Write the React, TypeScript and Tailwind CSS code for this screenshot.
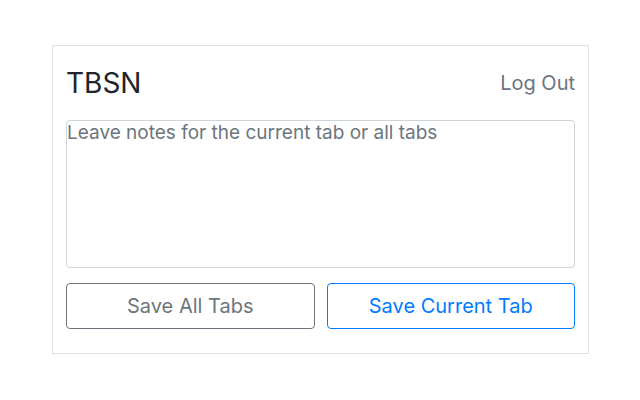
const App = () => {
  return (
    <div
      className="min-h-[400px] w-[640px] bg-white pl-[52px] pt-[45px]"
      style={{ fontFamily: 'Inter, "Liberation Sans", Arial, sans-serif' }}
    >
      <div className="flex w-[537px] flex-col border border-[#dee2e6] px-[13px] pt-[12px] pb-[24px]">
        <div className="mb-[12px] flex h-[50px] items-center justify-between">
          <h1 className="text-[28px] leading-none text-[#212529]">TBSN</h1>
          <button className="text-[20px] leading-none text-[#6c757d]">
            Log Out
          </button>
        </div>
        <textarea
          className="h-[148px] w-full resize-none rounded-[4px] border border-[#ced4da] px-0 py-0 text-[19px] leading-[1.25] text-[#495057] placeholder:text-[#6c757d] focus:outline-none"
          placeholder="Leave notes for the current tab or all tabs"
        />
        <div className="mt-[15px] grid grid-cols-2 gap-[12px]">
          <button className="h-[46px] rounded-[4px] border border-[#6c757d] text-[20px] text-[#6c757d]">
            Save All Tabs
          </button>
          <button className="h-[46px] rounded-[4px] border border-[#007bff] text-[20px] text-[#007bff]">
            Save Current Tab
          </button>
        </div>
      </div>
    </div>
  );
};

export default App;
